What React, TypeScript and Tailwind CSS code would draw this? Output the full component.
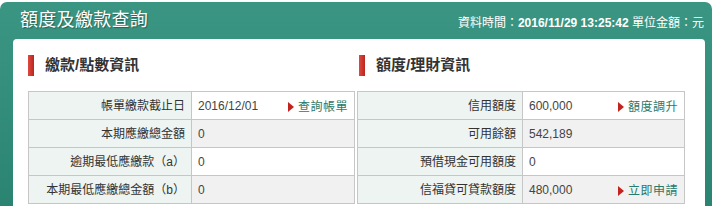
import React from "react";

const font = { fontFamily: '"Liberation Sans", Arial, "Noto Sans CJK TC", sans-serif' };

type Row = { label: string; value: string; link?: string };

const left: Row[] = [
  { label: "帳單繳款截止日", value: "2016/12/01", link: "查詢帳單" },
  { label: "本期應繳總金額", value: "0" },
  { label: "逾期最低應繳款（a）", value: "0" },
  { label: "本期最低應繳總金額（b）", value: "0" },
];

const right: Row[] = [
  { label: "信用額度", value: "600,000", link: "額度調升" },
  { label: "可用餘額", value: "542,189" },
  { label: "預借現金可用額度", value: "0" },
  { label: "信福貸可貸款額度", value: "480,000", link: "立即申請" },
];

function Heading({ title, offset }: { title: string; offset: string }) {
  return (
    <div className={`flex items-center h-[21px] mt-[16px] ${offset}`}>
      <div className="w-[6px] h-[21px] bg-gradient-to-r from-[#e0483f] to-[#b9261f]" />
      <div className="ml-[11px] text-[15px] font-bold text-[#333]">{title}</div>
    </div>
  );
}

function Table({ rows, labelW }: { rows: Row[]; labelW: string }) {
  return (
    <div className="mt-[15px] border-t border-l border-[#c6c6c6]">
      {rows.map((r, i) => (
        <div key={i} className="flex h-[28px] border-b border-[#c6c6c6] text-[12px]">
          <div
            className={`${labelW} shrink-0 bg-[#edf4f2] border-r border-[#c6c6c6] flex items-center justify-end pr-[6px] text-[#333]`}
          >
            {r.label}
          </div>
          <div
            className={`flex-1 flex items-center justify-between pl-[6px] pr-[6px] border-r border-[#c6c6c6] text-[#444] ${
              i % 2 === 1 ? "bg-[#f1f1f1]" : "bg-white"
            }`}
          >
            <span>{r.value}</span>
            {r.link && (
              <span className="flex items-center text-[#287a6b] mt-[3px]">
                <span className="w-0 h-0 border-y-[5px] border-y-transparent border-l-[6px] border-l-[#c2231d] mr-[4px]" />
                <span className="tracking-[0.5px]">{r.link}</span>
              </span>
            )}
          </div>
        </div>
      ))}
    </div>
  );
}

export default function App() {
  return (
    <div className="w-[720px] h-[206px] bg-white pt-[2px] overflow-hidden" style={font}>
      <div className="w-[712px] h-[204px] rounded-t-[7px] bg-gradient-to-b from-[#3a9683] to-[#2b8472] flex flex-col">
        <div className="h-[37px] flex items-center justify-between pl-[20px] pr-[8px]">
          <div
            className="text-white text-[18px] tracking-[0.3px]"
            style={{ textShadow: "1px 1px 1px rgba(0,0,0,0.35)" }}
          >
            額度及繳款查詢
          </div>
          <div className="text-white text-[12px] mt-[4px]">
            資料時間：<span className="font-bold">2016/11/29 13:25:42</span> 單位金額：元
          </div>
        </div>
        <div className="flex-1 mx-[13px] mr-[7px] bg-white rounded-t-[4px] flex pl-[15px] pr-[20px] gap-[2px]">
          <div className="w-[327px]">
            <Heading title="繳款/點數資訊" offset="" />
            <Table rows={left} labelW="w-[163px]" />
          </div>
          <div className="w-[328px]">
            <Heading title="額度/理財資訊" offset="ml-[2px]" />
            <Table rows={right} labelW="w-[165px]" />
          </div>
        </div>
      </div>
    </div>
  );
}
